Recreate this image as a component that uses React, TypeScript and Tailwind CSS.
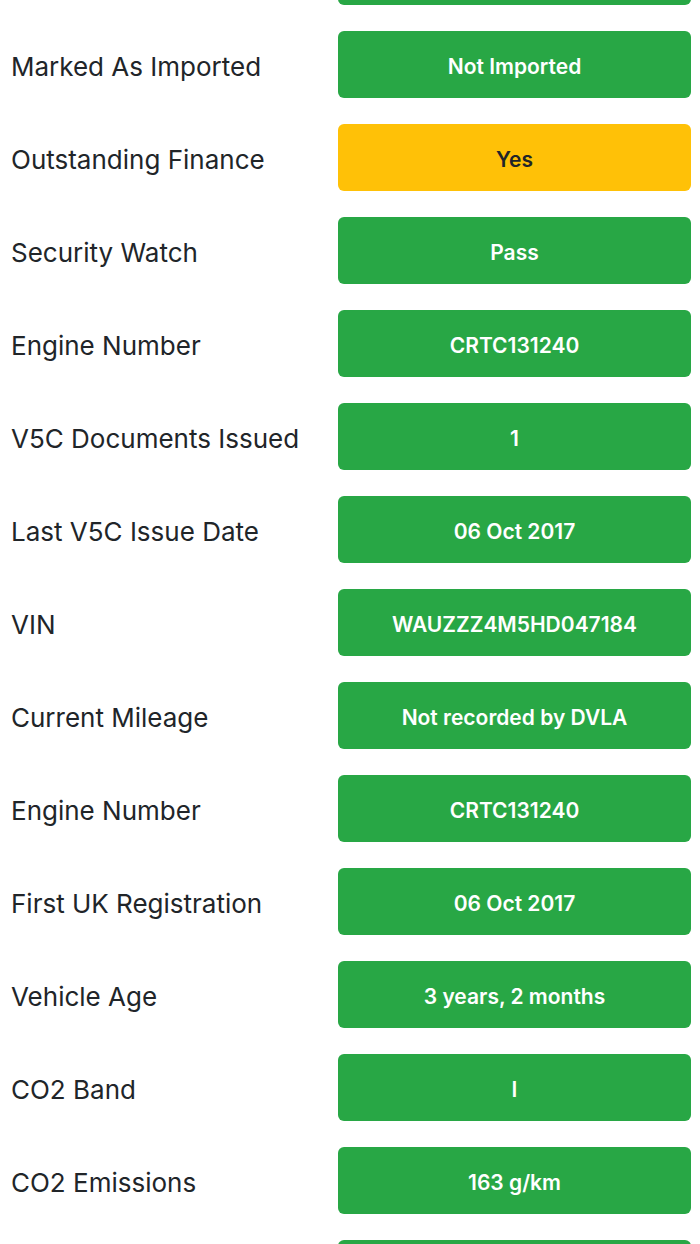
type Row = { label: string; value: string; tone?: 'ok' | 'warn' }

// first and last rows only peek in at the edges, so they carry no text
const rows: Row[] = [
  { label: '', value: '' },
  { label: 'Marked As Imported', value: 'Not Imported' },
  { label: 'Outstanding Finance', value: 'Yes', tone: 'warn' },
  { label: 'Security Watch', value: 'Pass' },
  { label: 'Engine Number', value: 'CRTC131240' },
  { label: 'V5C Documents Issued', value: '1' },
  { label: 'Last V5C Issue Date', value: '06 Oct 2017' },
  { label: 'VIN', value: 'WAUZZZ4M5HD047184' },
  { label: 'Current Mileage', value: 'Not recorded by DVLA' },
  { label: 'Engine Number', value: 'CRTC131240' },
  { label: 'First UK Registration', value: '06 Oct 2017' },
  { label: 'Vehicle Age', value: '3 years, 2 months' },
  { label: 'CO2 Band', value: 'I' },
  { label: 'CO2 Emissions', value: '163 g/km' },
  { label: '', value: '' },
]

function CheckRow({ label, value, tone = 'ok' }: Row) {
  const box =
    tone === 'warn'
      ? 'bg-[#ffc107] text-[#212529]'
      : 'bg-[#28a745] text-white'

  return (
    <div className="grid grid-cols-[327px_1fr] items-center h-[67px]">
      <span className="pt-[4px] text-[26px] text-[#212529] leading-none">{label}</span>
      <div className={`h-[67px] pt-[4px] rounded-[6px] flex items-center justify-center text-[21px] font-semibold leading-none ${box}`}>
        {value}
      </div>
    </div>
  )
}

export default function App() {
  return (
    <div
      className="h-[1244px] overflow-hidden bg-white"
      style={{ fontFamily: 'Inter, "Noto Sans", sans-serif' }}
    >
      <div className="-mt-[62px] pl-[11px] pr-[9px] flex flex-col gap-[26px]">
        {rows.map((r, i) => (
          <CheckRow key={i} {...r} />
        ))}
      </div>
    </div>
  )
}
